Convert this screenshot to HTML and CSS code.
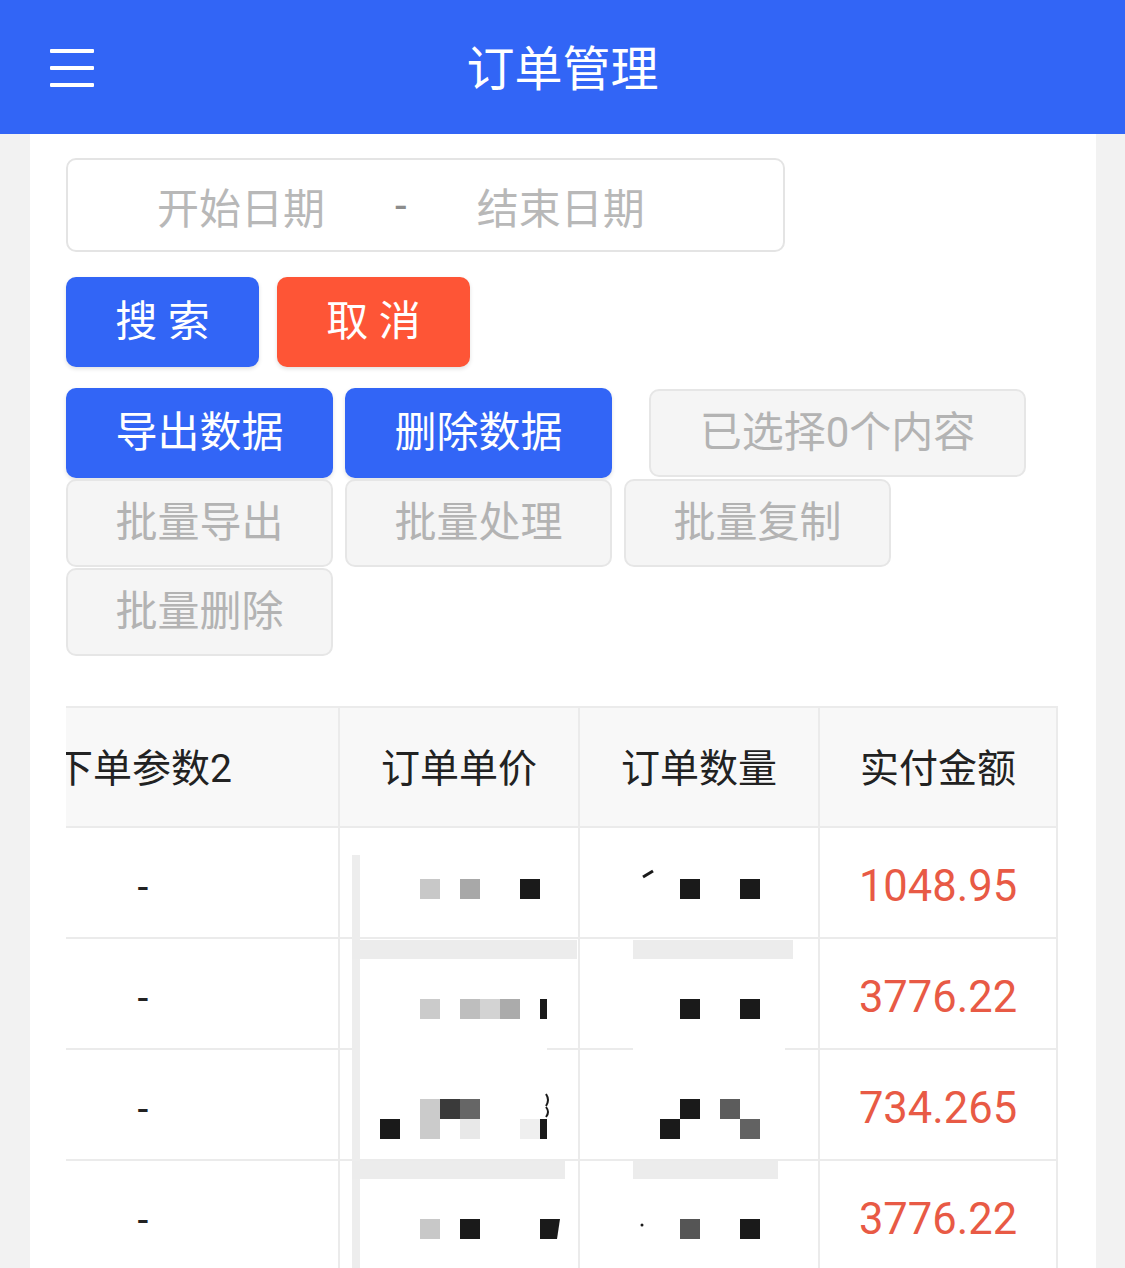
FILE: index.html
```html
<!DOCTYPE html>
<html lang="zh-CN">
<head>
<meta charset="utf-8">
<title>订单管理</title>
<link rel="stylesheet" href="styles.css">
</head>
<body>
<header class="topbar">
  <svg class="menu-icon" width="44" height="38" viewBox="0 0 44 38">
    <rect x="0" y="0" width="44" height="4" rx="1" fill="#fff"/>
    <rect x="0" y="17" width="44" height="4" rx="1" fill="#fff"/>
    <rect x="0" y="34" width="44" height="4" rx="1" fill="#fff"/>
  </svg>
  <h1 class="title">订单管理</h1>
  <span></span>
</header>

<main class="card">
  <div class="date-range">
    <span class="date-ph">开始日期</span>
    <span class="date-sep">-</span>
    <span class="date-ph">结束日期</span>
  </div>

  <div class="search-row">
    <button class="btn btn-blue btn-sm">搜 索</button>
    <button class="btn btn-red btn-sm">取 消</button>
  </div>

  <div class="action-wrap">
    <button class="btn btn-blue btn-md">导出数据</button>
    <button class="btn btn-blue btn-md">删除数据</button>
    <button class="btn btn-gray btn-sel">已选择0个内容</button>
    <button class="btn btn-gray btn-md">批量导出</button>
    <button class="btn btn-gray btn-md">批量处理</button>
    <button class="btn btn-gray btn-md">批量复制</button>
    <button class="btn btn-gray btn-md">批量删除</button>
  </div>

  <div class="table-scroll">
    <div class="grid">
      <div class="th">下单参数2</div>
      <div class="th">订单单价</div>
      <div class="th">订单数量</div>
      <div class="th">实付金额</div>

      <div class="td">-</div><div class="td"></div><div class="td"></div><div class="td money">1048.95</div>
      <div class="td">-</div><div class="td"></div><div class="td"></div><div class="td money">3776.22</div>
      <div class="td">-</div><div class="td"></div><div class="td"></div><div class="td money">734.265</div>
      <div class="td">-</div><div class="td"></div><div class="td"></div><div class="td money">3776.22</div>
    </div>

    <svg class="mosaic" width="480" height="445" viewBox="0 0 480 445">
      <rect x="12" y="28" width="8" height="417" fill="#ededed"/>
      <rect x="12" y="113" width="225" height="19" fill="#ececec"/>
      <rect x="293" y="113" width="160" height="19" fill="#ececec"/>
      <rect x="12" y="334" width="213" height="18" fill="#ececec"/>
      <rect x="293" y="334" width="145" height="18" fill="#ececec"/>
      <rect x="20" y="219" width="187" height="6" fill="#fff"/>
      <rect x="293" y="219" width="152" height="6" fill="#fff"/>

      <rect x="80" y="52" width="20" height="20" fill="#c8c8c8"/>
      <rect x="120" y="52" width="20" height="20" fill="#a8a8a8"/>
      <rect x="180" y="52" width="20" height="20" fill="#1a1a1a"/>
      <line x1="303" y1="50" x2="313" y2="44" stroke="#1a1a1a" stroke-width="3"/>
      <rect x="340" y="52" width="20" height="20" fill="#1a1a1a"/>
      <rect x="400" y="52" width="20" height="20" fill="#1a1a1a"/>

      <rect x="80" y="172" width="20" height="20" fill="#cbcbcb"/>
      <rect x="120" y="172" width="20" height="20" fill="#bebebe"/>
      <rect x="140" y="172" width="20" height="20" fill="#d3d3d3"/>
      <rect x="160" y="172" width="20" height="20" fill="#ababab"/>
      <rect x="200" y="172" width="7" height="20" fill="#1a1a1a"/>
      <rect x="340" y="172" width="20" height="20" fill="#1a1a1a"/>
      <rect x="400" y="172" width="20" height="20" fill="#1a1a1a"/>

      <rect x="80" y="272" width="20" height="20" fill="#cbcbcb"/>
      <rect x="100" y="272" width="20" height="20" fill="#3a3a3a"/>
      <rect x="120" y="272" width="20" height="20" fill="#666"/>
      <path d="M206 267 q4 6 0 12 M206 280 q4 5 0 10" stroke="#1a1a1a" stroke-width="2" fill="none"/>
      <rect x="340" y="272" width="20" height="20" fill="#1a1a1a"/>
      <rect x="380" y="272" width="20" height="20" fill="#5c5c5c"/>
      <rect x="40" y="292" width="20" height="20" fill="#1a1a1a"/>
      <rect x="80" y="292" width="20" height="20" fill="#cbcbcb"/>
      <rect x="120" y="292" width="20" height="20" fill="#e8e8e8"/>
      <rect x="180" y="292" width="20" height="20" fill="#efefef"/>
      <rect x="200" y="292" width="7" height="20" fill="#1a1a1a"/>
      <rect x="320" y="292" width="20" height="20" fill="#1a1a1a"/>
      <rect x="400" y="292" width="20" height="20" fill="#626262"/>

      <rect x="80" y="392" width="20" height="20" fill="#c8c8c8"/>
      <rect x="120" y="392" width="20" height="20" fill="#1a1a1a"/>
      <polygon points="200,392 220,392 217,412 200,412" fill="#1a1a1a"/>
      <circle cx="302" cy="398" r="1.5" fill="#1a1a1a"/>
      <rect x="340" y="392" width="20" height="20" fill="#555"/>
      <rect x="400" y="392" width="20" height="20" fill="#1a1a1a"/>
    </svg>
  </div>
</main>
</body>
</html>
```

FILE: styles.css
```css
* {
  box-sizing: border-box;
}

html, body {
  margin: 0;
  padding: 0;
}

body {
  width: 1125px;
  height: 1268px;
  overflow: hidden;
  background: #f2f2f2;
  font-family: Roboto, "Noto Sans CJK SC", sans-serif;
  color: #222;
}

.topbar {
  height: 134px;
  background: #3265f6;
  display: grid;
  grid-template-columns: 1fr auto 1fr;
  align-items: center;
  padding: 0 50px;
}

.menu-icon {
  display: block;
  margin-top: 2px;
}

.title {
  margin: 5px 0 0;
  font-size: 48px;
  font-weight: 400;
  color: #fff;
  line-height: 1;
}

.card {
  margin: 0 29px 0 30px;
  background: #fff;
  padding: 24px 36px 0;
  height: 1134px;
}

.date-range {
  width: 719px;
  height: 94px;
  border: 2px solid #e4e4e4;
  border-radius: 10px;
  display: flex;
  align-items: center;
  gap: 70px;
  padding-left: 89px;
  font-size: 42px;
  color: #b8b8b8;
}

.date-sep {
  color: #8c8c8c;
}

.search-row {
  margin-top: 25px;
  display: flex;
  gap: 18px;
}

.btn {
  border: none;
  margin: 0;
  padding: 0;
  font-family: inherit;
  font-size: 42px;
  line-height: 1;
  border-radius: 10px;
  display: flex;
  align-items: center;
  justify-content: center;
}

.btn-blue {
  background: #3265f6;
  color: #fff;
  box-shadow: 0 2px 4px rgba(0, 0, 0, 0.12);
}

.btn-red {
  background: #fe5536;
  color: #fff;
  box-shadow: 0 2px 4px rgba(0, 0, 0, 0.12);
}

.btn-gray {
  background: #f5f5f5;
  color: #b3b3b3;
  border: 2px solid #e6e6e6;
  height: 88px;
}

.btn-sm {
  width: 193px;
  height: 90px;
}

.btn-md {
  width: 267px;
  height: 90px;
}

.btn-gray.btn-md {
  height: 88px;
}

.btn-sel {
  width: 377px;
  margin-left: 25px;
}

.action-wrap {
  margin-top: 21px;
  display: flex;
  flex-wrap: wrap;
  align-items: center;
  column-gap: 12px;
  row-gap: 1px;
}

.table-scroll {
  position: relative;
  margin-top: 50px;
  width: 992px;
  overflow: hidden;
  direction: rtl;
}

.grid {
  direction: ltr;
  width: 1110px;
  display: grid;
  grid-template-columns: 392px 240px 240px 238px;
  grid-template-rows: 120px;
  grid-auto-rows: 111px;
  border-top: 2px solid #ebebeb;
}

.th,
.td {
  display: flex;
  align-items: center;
  justify-content: center;
  border-right: 2px solid #ebebeb;
  border-bottom: 2px solid #ebebeb;
}

.th {
  background: #f8f8f8;
  font-size: 39px;
  color: #222;
  padding-bottom: 4px;
}

.td {
  font-size: 39px;
  color: #222;
  padding-top: 8px;
}

.money {
  font-size: 43.5px;
  color: #e85a45;
}

.mosaic {
  position: absolute;
  left: 274px;
  top: 121px;
  pointer-events: none;
  direction: ltr;
}
```
